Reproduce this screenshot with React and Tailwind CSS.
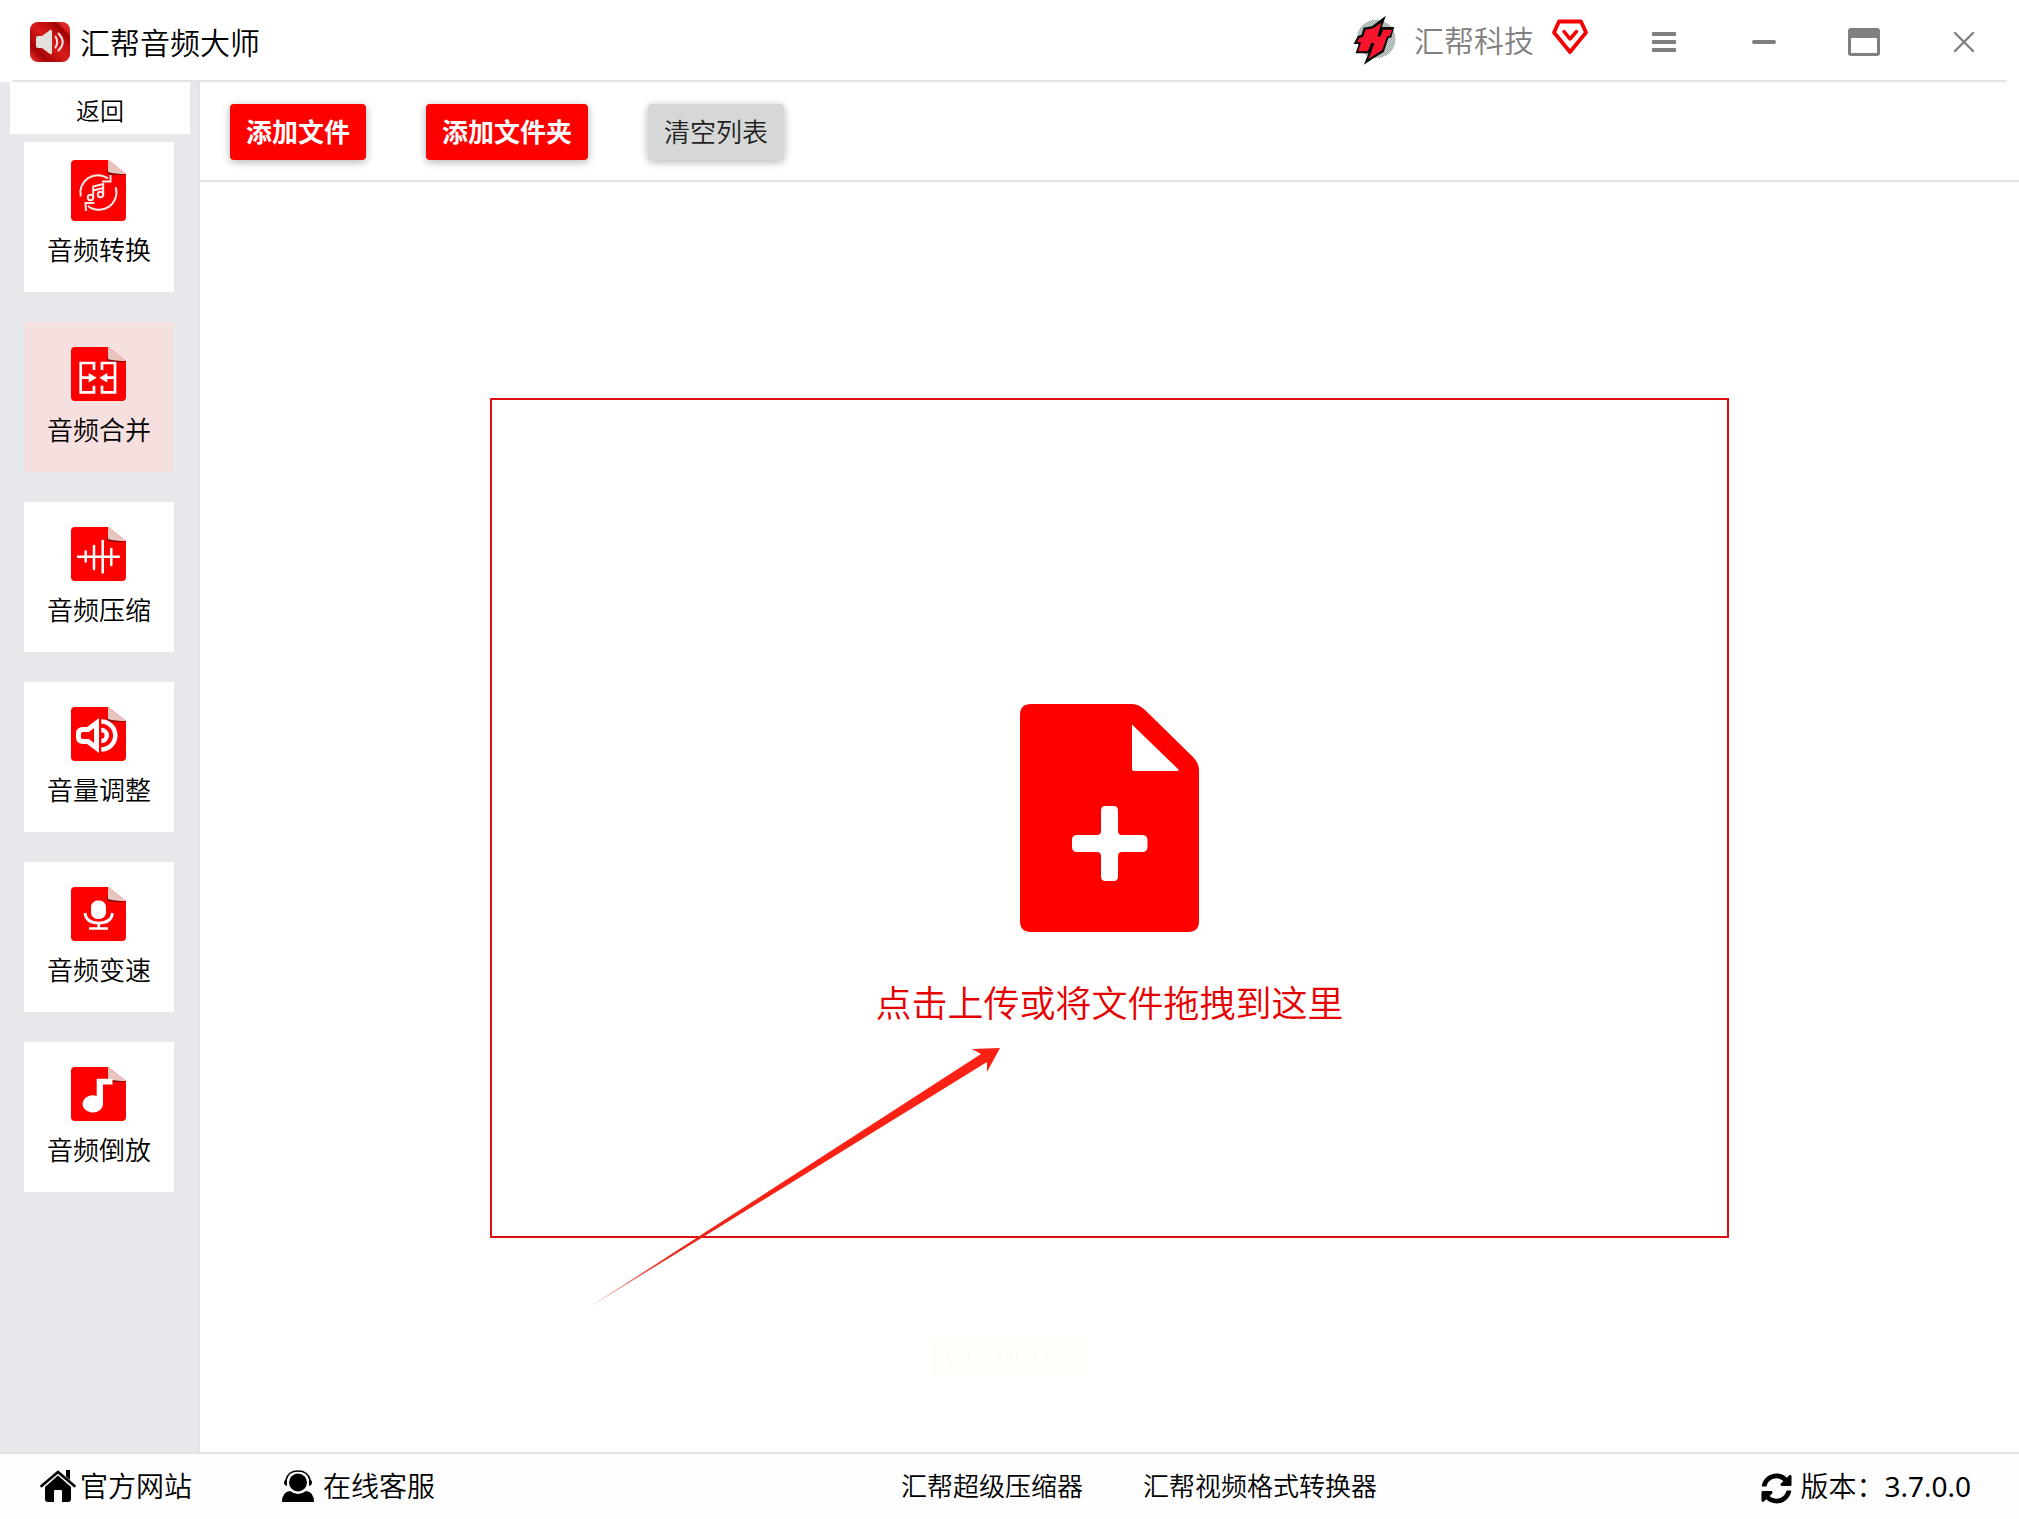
import { useState } from 'react';
import { FaSyncAlt } from 'react-icons/fa';

const tools = [
  { id: 'convert', label: '音频转换', icon: ConvertIcon },
  { id: 'merge', label: '音频合并', icon: MergeIcon },
  { id: 'compress', label: '音频压缩', icon: CompressIcon },
  { id: 'volume', label: '音量调整', icon: VolumeIcon },
  { id: 'speed', label: '音频变速', icon: SpeedIcon },
  { id: 'reverse', label: '音频倒放', icon: ReverseIcon },
];

export default function App() {
  const [active, setActive] = useState('merge');

  return (
    <div className="min-h-screen flex flex-col bg-white text-black font-[350] font-['Noto_Sans','Noto_Sans_CJK_SC',sans-serif]">
      <TitleBar />
      <div className="flex flex-1">
        <Sidebar active={active} onSelect={setActive} />
        <main className="flex-1 flex flex-col">
          <Toolbar />
          <DropArea />
        </main>
      </div>
      <Footer />
    </div>
  );
}

function TitleBar() {
  return (
    <header className="mx-3 h-[82px] flex items-center border-b-2 border-[#e4e4e4]">
      <div className="flex items-center gap-[10px] pl-[18px] pt-1">
        <AppIcon />
        <h1 className="pt-0.5 text-[30px] leading-10">汇帮音频大师</h1>
      </div>
      <div className="ml-auto flex items-center text-[#808080]">
        <BrandLogo />
        <span className="ml-[18px] pt-0.5 text-[30px] leading-10">汇帮科技</span>
        <a href="#vip" aria-label="VIP" className="ml-[18px] mb-1.5"><VipIcon /></a>
      </div>
      <div className="ml-[26px] -mr-[7px] pt-1 flex text-[#808080]">
        <WindowButton title="菜单">
          <path d="M4 8h24v4H4zM4 16h24v4H4zM4 24h24v4H4z" />
        </WindowButton>
        <WindowButton title="最小化">
          <rect x="4" y="16" width="24" height="4" rx="2" />
        </WindowButton>
        <WindowButton title="最大化">
          <path fillRule="evenodd" d="M3 4h26q3 0 3 3v22q0 3-3 3H3q-3 0-3-3V7q0-3 3-3zM3 14v15h26V14z" />
        </WindowButton>
        <WindowButton title="关闭">
          <path d="M7 9l18 18M25 9L7 27" fill="none" stroke="currentColor" strokeWidth="2.4" strokeLinecap="round" />
        </WindowButton>
      </div>
    </header>
  );
}

function WindowButton({ title, children }) {
  return (
    <button title={title} className="w-[100px] h-10 flex items-center justify-center">
      <svg width="32" height="36" viewBox="0 0 32 36" fill="currentColor">{children}</svg>
    </button>
  );
}

function Sidebar({ active, onSelect }) {
  return (
    <aside className="w-[200px] shrink-0 bg-[#e6e8ec] border-r-2 border-[#e4e4e4] pb-8">
      <button className="block ml-[10px] w-[180px] h-[52px] bg-white text-2xl leading-8 pt-1.5">返回</button>
      <nav className="ml-6 mt-2 w-[150px] flex flex-col gap-[30px]">
        {tools.map(({ id, label, icon: Icon }) => (
          <button
            key={id}
            onClick={() => onSelect(id)}
            className={`h-[150px] flex flex-col items-center ${active === id ? 'bg-[#f6dfdf]' : 'bg-white'}`}
          >
            <span className="h-[79px] pr-0.5 flex items-end"><Icon /></span>
            <span className="mt-[11px] text-[26px] leading-9">{label}</span>
          </button>
        ))}
      </nav>
    </aside>
  );
}

function Toolbar() {
  return (
    <div className="h-[100px] flex items-center gap-[60px] pl-[30px] pt-0.5 border-b-2 border-[#e4e4e4] text-[26px] leading-9">
      <button className="h-14 px-4 rounded bg-[#fe0000] text-white font-bold shadow-[0_2px_8px_rgba(0,0,0,0.3)]">添加文件</button>
      <button className="h-14 px-4 rounded bg-[#fe0000] text-white font-bold shadow-[0_2px_8px_rgba(0,0,0,0.3)]">添加文件夹</button>
      <button className="h-14 px-4 rounded bg-[#d6d8d7] text-[#222] shadow-[0_2px_8px_rgba(0,0,0,0.3)]">清空列表</button>
    </div>
  );
}

function DropArea() {
  return (
    <section className="relative flex-1 flex flex-col px-[290px] pt-[216px] pb-[214px]">
      <button className="flex-1 flex flex-col items-center justify-center pt-[94px] border-2 border-[#dc1010] text-[#e60000]">
        <svg width="179" height="228" viewBox="0 0 179 228">
          <path d="M11 0H112Q119 0 125 6L173 53Q179 59 179 66V217Q179 228 168 228H11Q0 228 0 217V11Q0 0 11 0Z" fill="#fe0000" />
          <path d="M112 20.5L158.500 65.500Q159 67 157 67H114Q112 67 112 65Z" fill="#fff" />
          <path
            d="M85 102H94Q98 102 98 107V127Q98 131 102 131H122Q127.500 131 127.500 136V143Q127.500 148 122 148H102Q98 148 98 152V172Q98 177 94 177H85Q81 177 81 172V152Q81 148 77 148H57Q52 148 52 143V136Q52 131 57 131H77Q81 131 81 127V107Q81 102 85 102Z"
            fill="#fff"
          />
        </svg>
        <span className="mt-[50px] text-[36px] leading-[44px]">点击上传或将文件拖拽到这里</span>
      </button>

      {/* pointer to the upload hint */}
      <svg className="absolute left-[388px] top-[866px] pointer-events-none" width="412" height="260" viewBox="0 0 412 260">
        <defs>
          <linearGradient id="tail" x1="0" y1="1" x2="1" y2="0">
            <stop offset="0" stopColor="#e03020" stopOpacity="0.5" />
            <stop offset="0.2" stopColor="#e8281c" />
            <stop offset="0.5" stopColor="#fb2114" />
          </linearGradient>
        </defs>
        <path d="M0 260L393 6L384 1L412 0L399 24L399 14Z" fill="url(#tail)" />
      </svg>
      <span className="absolute left-[731px] top-[1156px] w-[158px] h-[39px] pl-3 bg-[#fffffa] text-[#fbfbf7] text-2xl leading-[39px] font-['Liberation_Serif',serif]">
        1765446473
      </span>
    </section>
  );
}

function Footer() {
  return (
    <footer className="h-[67px] flex items-center pl-10 pr-12 pb-0.5 border-t-2 border-[#e4e4e4] bg-[#fdfdfd] text-[28px] leading-9">
      <a href="#site" className="flex items-center gap-1"><HomeIcon />官方网站</a>
      <a href="#support" className="ml-[90px] flex items-center gap-[9px]"><SupportIcon />在线客服</a>
      <div className="ml-[466px] flex gap-[60px] text-[26px]">
        <a href="#compressor">汇帮超级压缩器</a>
        <a href="#video">汇帮视频格式转换器</a>
      </div>
      <button className="ml-auto flex items-center gap-2">
        <FaSyncAlt size={31} className="mt-1.5" />
        <span>版本：<span className="font-normal">3.7.0.0</span></span>
      </button>
    </footer>
  );
}

/* ---- icons ---- */

// red sheet with a folded corner, shared by all the tool icons
function Sheet({ tall, children }) {
  const h = tall ? 61 : 54;
  return (
    <svg width="55" height={h} viewBox={`0 0 55 ${h}`} fill="none">
      <path d={`M4 0H37L55 14V${h - 4}Q55 ${h} 51 ${h}H4Q0 ${h} 0 ${h - 4}V4Q0 0 4 0Z`} fill="#fe0000" />
      <path d="M36 10V13Q37 15 46 15H55L50 12Z" fill="#8c0000" />
      <path d="M37 0L55 14Q44 14 37 12Z" fill="#e6c5bf" />
      {children}
    </svg>
  );
}

function ConvertIcon() {
  return (
    <Sheet tall>
      <g stroke="#fbe9e7" strokeWidth="2">
        <path d="M9.7 36.500A17.500 17.500 0 0 1 37 18.500M44.700 27.300A17.500 17.500 0 0 1 17 46" />
        <path d="M39.500 15V21.500H31M23.500 43H14.500L15 51" />
        <circle cx="19.500" cy="37.500" r="2.700" />
        <circle cx="29.500" cy="34.500" r="2.700" />
        <path d="M22.200 37.500V26.500L32.200 24V34.500M22.200 30.500L32.200 28" />
      </g>
    </Sheet>
  );
}

function MergeIcon() {
  return (
    <Sheet>
      <path d="M23 23V16H9.700V45.300H23V38.700M31 23V16H44V45.300H31V38.700M10 30.700H19M44 30.700H35" stroke="#fff" strokeWidth="2.700" />
      <path d="M17.700 26L25.700 30.700L17.700 35.400ZM36.300 26L28.300 30.700L36.300 35.400Z" fill="#fff" />
    </Sheet>
  );
}

function CompressIcon() {
  return (
    <Sheet>
      <path d="M7 29.700H48M14.700 24.500V34.500M23 19V42M31.700 14V45.500M40.300 22V38" stroke="#fff" strokeWidth="2.500" strokeLinecap="round" />
    </Sheet>
  );
}

function VolumeIcon() {
  return (
    <Sheet>
      <path d="M25.500 16V41L17 34.500H12Q7.500 34.500 7.500 30.500V26.500Q7.500 22.500 12 22.500H17Z" stroke="#fff" strokeWidth="5" />
      <path d="M30.300 14.500A14 14 0 0 1 30.300 42.500" stroke="#fff" strokeWidth="4.500" />
      <path d="M30.300 23A5.500 5.500 0 0 1 30.300 34" stroke="#fff" strokeWidth="4.500" />
    </Sheet>
  );
}

function SpeedIcon() {
  return (
    <Sheet>
      <rect x="20" y="13.500" width="15" height="18.500" rx="6.500" fill="#fff" />
      <path d="M14 26Q15 36 27.700 36Q40.500 36 41.500 26M27.700 36V41.500M18 41.500H37" stroke="#fff" strokeWidth="2.700" />
    </Sheet>
  );
}

function ReverseIcon() {
  return (
    <Sheet>
      <path d="M25.700 11.700H41.500V17.500H32V37A10.200 8.600 0 1 1 25.700 29Z" fill="#fff" />
    </Sheet>
  );
}

function AppIcon() {
  return (
    <svg width="40" height="40" viewBox="0 0 40 40">
      <defs>
        <linearGradient id="app" x1="0" y1="1" x2="1" y2="0">
          <stop offset="0.08" stopColor="#db2220" />
          <stop offset="0.22" stopColor="#a50505" />
          <stop offset="0.5" stopColor="#d81c1a" />
          <stop offset="0.68" stopColor="#c40d0d" />
          <stop offset="0.8" stopColor="#9c0000" />
          <stop offset="0.86" stopColor="#dc2422" />
        </linearGradient>
      </defs>
      <rect width="40" height="40" rx="8" fill="url(#app)" />
      <path d="M8 14H12L20 8Q22 7 22 10V30Q22 33 20 32L12 26H8Q6 26 6 24V16Q6 14 8 14Z" fill="#e2dfdc" />
      <path d="M25.500 14.500Q29 20 25.500 25.500M28.500 11.500Q37 20 28.500 28.500" fill="none" stroke="#f3dede" strokeWidth="2" strokeLinecap="round" />
    </svg>
  );
}

function BrandLogo() {
  return (
    <svg width="43" height="50" viewBox="36 42 128 150">
      <defs>
        <pattern id="dots" width="6" height="6" patternUnits="userSpaceOnUse">
          <rect width="6" height="6" fill="#d3d9d7" />
          <path d="M0 0h3v3H0zM3 3h3v3H3z" fill="#93a29e" />
        </pattern>
      </defs>
      <circle cx="105" cy="114" r="58" fill="url(#dots)" />
      <path d="M134 44L122 78H159L150 110H142L128 153L104 167L68 191L82 157H43L53 129H37L50 105L61 101L67 80L92 76Z" fill="#0a0a0a" />
      <path
        d="M121 65L108 106H118L126 86H153L146 105H138L123 148L104 160L82 174L90 152L99 126H90L80 151H51L60 124H47L55 111L66 107L73 86L96 82Z"
        fill="#f8142f"
      />
      <path d="M121 78L111 106H118L126 84ZM97 126L88 150L85 166L91 150L100 126Z" fill="#0a0a0a" />
    </svg>
  );
}

function VipIcon() {
  return (
    <svg width="36" height="36" viewBox="0 0 36 36" fill="none" stroke="#f40000" strokeLinecap="round" strokeLinejoin="round">
      <path d="M7 2.500H29L34 13.500L18 33L2 13.500Z" strokeWidth="3.800" />
      <path d="M12 12.500L18 20L24.500 12.500" strokeWidth="3.500" />
    </svg>
  );
}

function HomeIcon() {
  return (
    <svg width="36" height="32" viewBox="0 0 36 32">
      <path d="M1.500 16L18 2L34.500 16" fill="none" stroke="#000" strokeWidth="2.600" strokeLinecap="round" />
      <path d="M26 0H30V10L26 6.500Z" />
      <path d="M18 5.500L31 17V29Q31 32 28 32H22V21Q22 20 21 20H15Q14 20 14 21V32H8Q5 32 5 29V17Z" />
    </svg>
  );
}

function SupportIcon() {
  return (
    <svg width="32" height="32" viewBox="0 0 32 32">
      <circle cx="16" cy="12.500" r="9" />
      <path d="M4 10Q6 1 16 1Q26 1 28 10" fill="none" stroke="#000" strokeWidth="1.500" />
      <path d="M5 9V16Q2 15 2 12.500Q2 10 5 9ZM27 9V16Q30 15 30 12.500Q30 10 27 9Z" />
      <path d="M0 32Q0 22 8 21Q16 27 24 21Q32 22 32 32Z" />
    </svg>
  );
}
